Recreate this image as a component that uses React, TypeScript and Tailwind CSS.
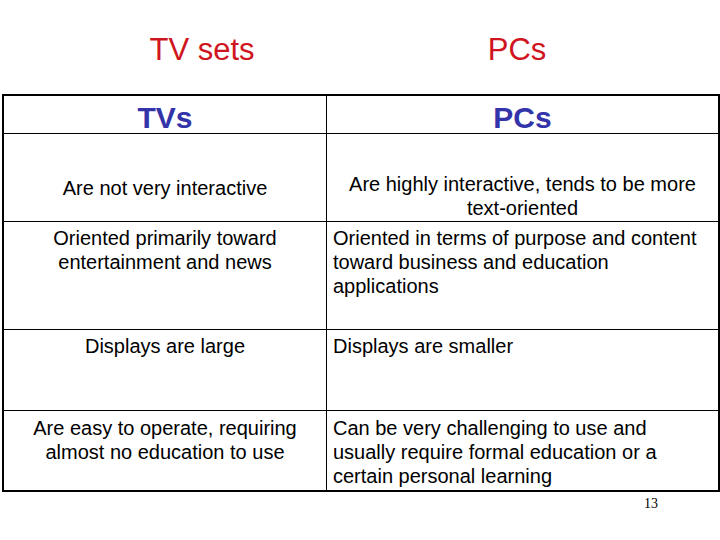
const rows = [
  {
    left: ["Are not very interactive"],
    right: ["Are highly interactive, tends to be more", "text-oriented"],
    rightCenter: true,
    h: "h-[88px]",
    leftPad: "pt-[42px]",
    rightPad: "pt-[38px]",
  },
  {
    left: ["Oriented primarily toward", "entertainment and news"],
    right: [
      "Oriented in terms of purpose and content",
      "toward business and education",
      "applications",
    ],
    rightCenter: false,
    h: "h-[108px]",
    leftPad: "pt-[4px]",
    rightPad: "pt-[4px]",
  },
  {
    left: ["Displays are large"],
    right: ["Displays are smaller"],
    rightCenter: false,
    h: "h-[81px]",
    leftPad: "pt-[4px]",
    rightPad: "pt-[4px]",
  },
  {
    left: ["Are easy to operate, requiring", "almost no education to use"],
    right: [
      "Can be very challenging to use and",
      "usually require formal education or a",
      "certain personal learning",
    ],
    rightCenter: false,
    h: "h-[79px]",
    leftPad: "pt-[5px]",
    rightPad: "pt-[5px]",
  },
];

function Lines({ lines }: { lines: string[] }) {
  return (
    <>
      {lines.map((l, i) => (
        <div key={i} className="whitespace-nowrap">
          {l}
        </div>
      ))}
    </>
  );
}

export default function App() {
  return (
    <div className="w-[720px] h-[540px] bg-white overflow-hidden font-['Liberation_Sans',Arial,sans-serif] text-black">
      {/* slide titles */}
      <div className="flex pt-[32px] h-[94px] text-[31px] leading-[36px] text-[#cf1520]">
        <div className="w-[404px] text-center">TV sets</div>
        <div className="w-[226px] text-center">PCs</div>
      </div>

      <div className="ml-[2px] w-[718px] border-2 border-black">
        <div className="grid grid-cols-[323px_1fr] h-[38px] border-b border-black">
          <div className="border-r border-black flex items-center justify-center pt-[6px] text-[30px] leading-[32px] font-bold text-[#3333aa]">
            TVs
          </div>
          <div className="flex items-center justify-center pt-[6px] text-[30px] leading-[32px] font-bold text-[#3333aa]">
            PCs
          </div>
        </div>

        {rows.map((r, i) => (
          <div
            key={i}
            className={`grid grid-cols-[323px_1fr] text-[20px] leading-[24px] ${r.h} ${
              i < rows.length - 1 ? "border-b border-black" : ""
            }`}
          >
            <div className={`border-r border-black text-center ${r.leftPad}`}>
              <Lines lines={r.left} />
            </div>
            <div
              className={`${r.rightPad} ${
                r.rightCenter ? "text-center" : "pl-[6px] text-left"
              }`}
            >
              <Lines lines={r.right} />
            </div>
          </div>
        ))}
      </div>

      <div className="flex justify-end pr-[62px] mt-[4px] font-['Liberation_Serif',serif] text-[14px] leading-[16px]">
        13
      </div>
    </div>
  );
}
